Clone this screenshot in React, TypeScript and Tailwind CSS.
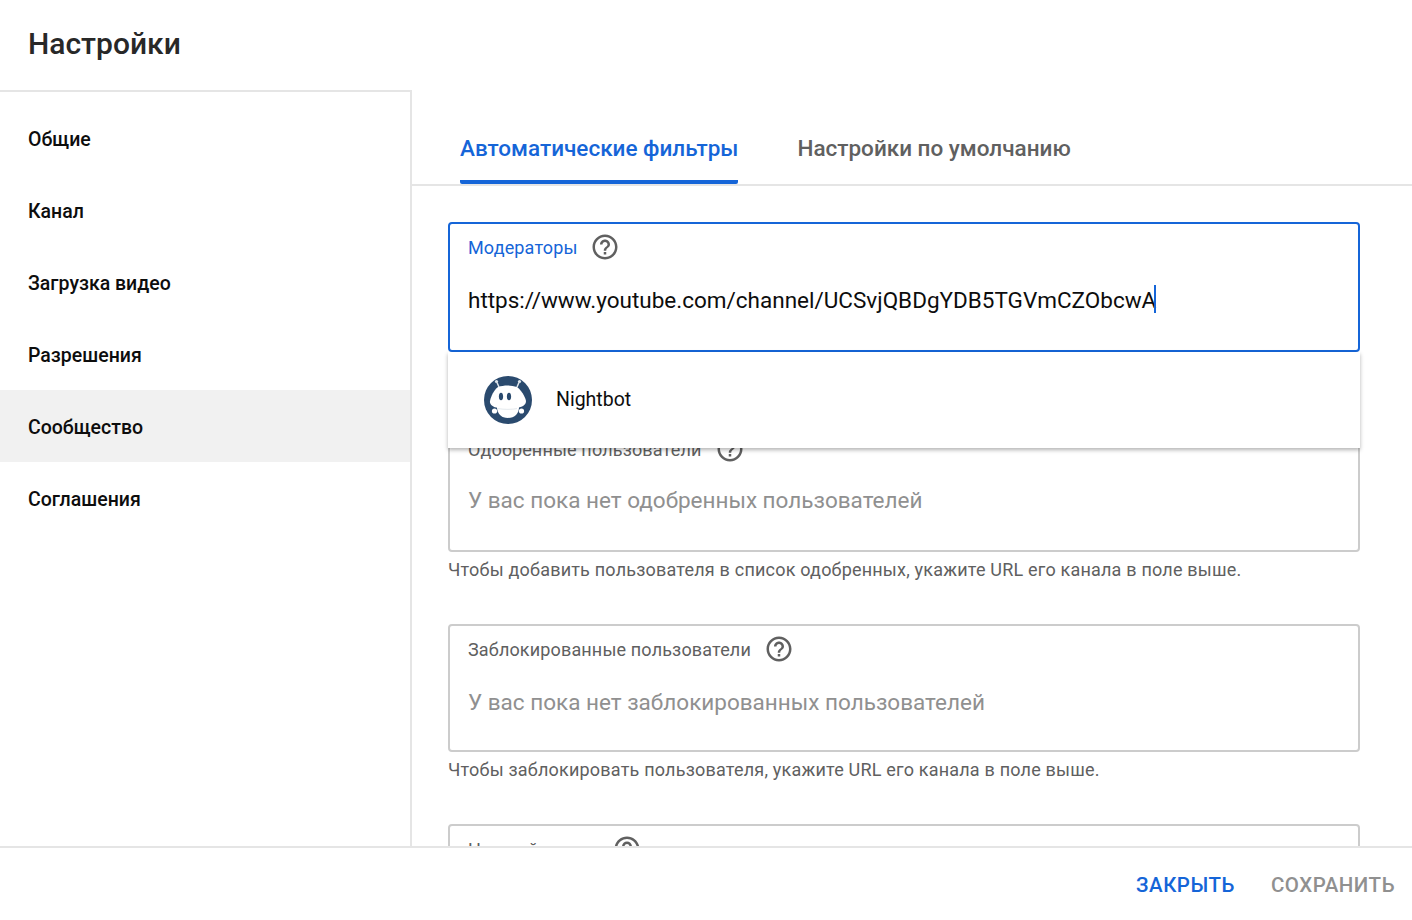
import React from "react";

const Help = ({ className = "" }: { className?: string }) => (
  <svg viewBox="0 0 24 24" className={`h-[30px] w-[30px] shrink-0 fill-[#606060] ${className}`}>
    <path d="M11 18h2v-2h-2v2zm1-16C6.48 2 2 6.48 2 12s4.48 10 10 10 10-4.48 10-10S17.52 2 12 2zm0 18c-4.41 0-8-3.59-8-8s3.59-8 8-8 8 3.59 8 8-3.59 8-8 8zm0-14c-2.21 0-4 1.79-4 4h2c0-1.1.9-2 2-2s2 .9 2 2c0 2-3 1.75-3 5h2c0-2.25 3-2.5 3-5 0-2.21-1.79-4-4-4z" />
  </svg>
);

const Bot = () => (
  <svg viewBox="0 0 48 48" className="h-12 w-12">
    <circle cx="24" cy="24" r="24" fill="#2a4a6e" />
    <circle cx="12.5" cy="5.5" r="1.6" fill="#dfe6ec" />
    <circle cx="35.5" cy="5.5" r="1.6" fill="#dfe6ec" />
    <path d="M13 6.5 L15 11 M35 6.5 L33 11" stroke="#dfe6ec" strokeWidth="1.5" />
    <path d="M13 30 L35 30 C35.5 37 31 42 24 42 C17 42 12.5 37 13 30 Z" fill="#fff" />
    <path d="M14 11 C20 9 27 9 33 11 C37 14 41 20 42 25 C42 29 38 31 33 32 C27 33 20 33 14 32 C9 31 5.5 29 6 25 C7 20 10 14 14 11 Z" fill="#fff" />
    <path d="M14 32.6 C20 33.6 28 33.6 33 32.6" fill="none" stroke="#dde3e9" strokeWidth="0.8" />
    <circle cx="10.5" cy="35" r="2.6" fill="#fff" />
    <circle cx="37.5" cy="35" r="2.6" fill="#fff" />
    <ellipse cx="17" cy="20.5" rx="2.1" ry="3.8" fill="#2a4a6e" />
    <ellipse cx="25" cy="20.5" rx="2.1" ry="3.8" fill="#2a4a6e" />
  </svg>
);

const nav = ["Общие", "Канал", "Загрузка видео", "Разрешения", "Сообщество", "Соглашения"];

const Field = ({
  label,
  text,
  hint,
  labelClass = "tracking-[0.15px]",
  textClass = "mt-[23px]",
}: {
  label: string;
  text: string;
  hint: string;
  labelClass?: string;
  textClass?: string;
}) => (
  <div className="mb-[41px]">
    <div className="h-[128px] rounded border-2 border-[#cccccc] px-[18px] pt-[8px]">
      <div className={`flex h-[30px] items-center gap-[13px] text-[18px] text-[#606060] ${labelClass}`}>
        <span>{label}</span>
        <Help />
      </div>
      <div className={`h-[30px] text-[22.5px] leading-[30px] text-[#909090] ${textClass}`}>{text}</div>
    </div>
    <div className="mt-[6px] h-[25px] text-[18px] leading-[24px] tracking-[0.2px] text-[#606060]">{hint}</div>
  </div>
);

export default function App() {
  return (
    <div className="flex h-[920px] w-[1412px] flex-col overflow-hidden bg-white font-['Roboto',sans-serif] text-[#0d0d0d]">
      <header className="flex h-[90px] shrink-0 items-center pb-[4px] pl-[28px] text-[30px] font-medium text-[#282828]">
        Настройки
      </header>
      <div className="flex min-h-0 flex-1">
        <nav className="w-[412px] shrink-0 border-r-2 border-t-2 border-[#e5e5e5] pt-[10px]">
          {nav.map((n) => (
            <div
              key={n}
              className={`flex h-[72px] items-center pl-[28px] pt-[4px] text-[19.5px] font-medium ${n === "Сообщество" ? "bg-[#f1f1f1]" : ""}`}
            >
              {n}
            </div>
          ))}
        </nav>
        <main className="relative min-w-0 flex-1 overflow-hidden">
          <div className="flex h-[96px] items-start gap-[60px] border-b-2 border-[#e5e5e5] pl-[48px] pt-[42px] text-[22.5px] font-medium">
            <div className="h-[52px] rounded-b-[2px] border-b-4 border-[#1565d8] text-[#1565d8]">Автоматические фильтры</div>
            <div className="-ml-px text-[#606060]">Настройки по умолчанию</div>
          </div>
          <div className="relative pl-[36px] pr-[52px] pt-[36px]">
            <div className="mb-[72px] h-[130px] rounded border-2 border-[#1565d8] px-[18px] pt-[8px]">
              <div className="flex h-[30px] items-center gap-[12px] text-[18px] tracking-[0.15px] text-[#1565d8]">
                <span>Модераторы</span>
                <Help />
              </div>
              <div className="mt-[23px] flex text-[22.5px] leading-[30px] text-[#0d0d0d]">
                <span>https://www.youtube.com/channel/UCSvjQBDgYDB5TGVmCZObcwA</span>
                <span className="-ml-[2px] h-[28px] w-[2px] bg-[#1565d8]" />
              </div>
            </div>
            <Field label="Одобренные пользователи" textClass="mt-[21px]" text="У вас пока нет одобренных пользователей" hint="Чтобы добавить пользователя в список одобренных, укажите URL его канала в поле выше." />
            <Field label="Заблокированные пользователи" text="У вас пока нет заблокированных пользователей" hint="Чтобы заблокировать пользователя, укажите URL его канала в поле выше." />
            <Field label="Настройки чата" labelClass="tracking-[-0.2px]" text="" hint="" />
            <div className="absolute left-[36px] right-[52px] top-[166px] flex h-[96px] items-center bg-white pl-[36px] shadow-[0_2px_4px_rgba(0,0,0,0.3)]">
              <Bot />
              <span className="ml-[24px] text-[19.5px]">Nightbot</span>
            </div>
          </div>
        </main>
      </div>
      <footer className="relative z-10 flex h-[74px] shrink-0 items-center justify-end gap-[36px] border-t-2 border-[#e5e5e5] bg-white pr-[17px] pt-[2px] text-[20.5px] font-medium tracking-[0.5px]">
        <span className="text-[#1565d8]">ЗАКРЫТЬ</span>
        <span className="text-[#909090]">СОХРАНИТЬ</span>
      </footer>
    </div>
  );
}
